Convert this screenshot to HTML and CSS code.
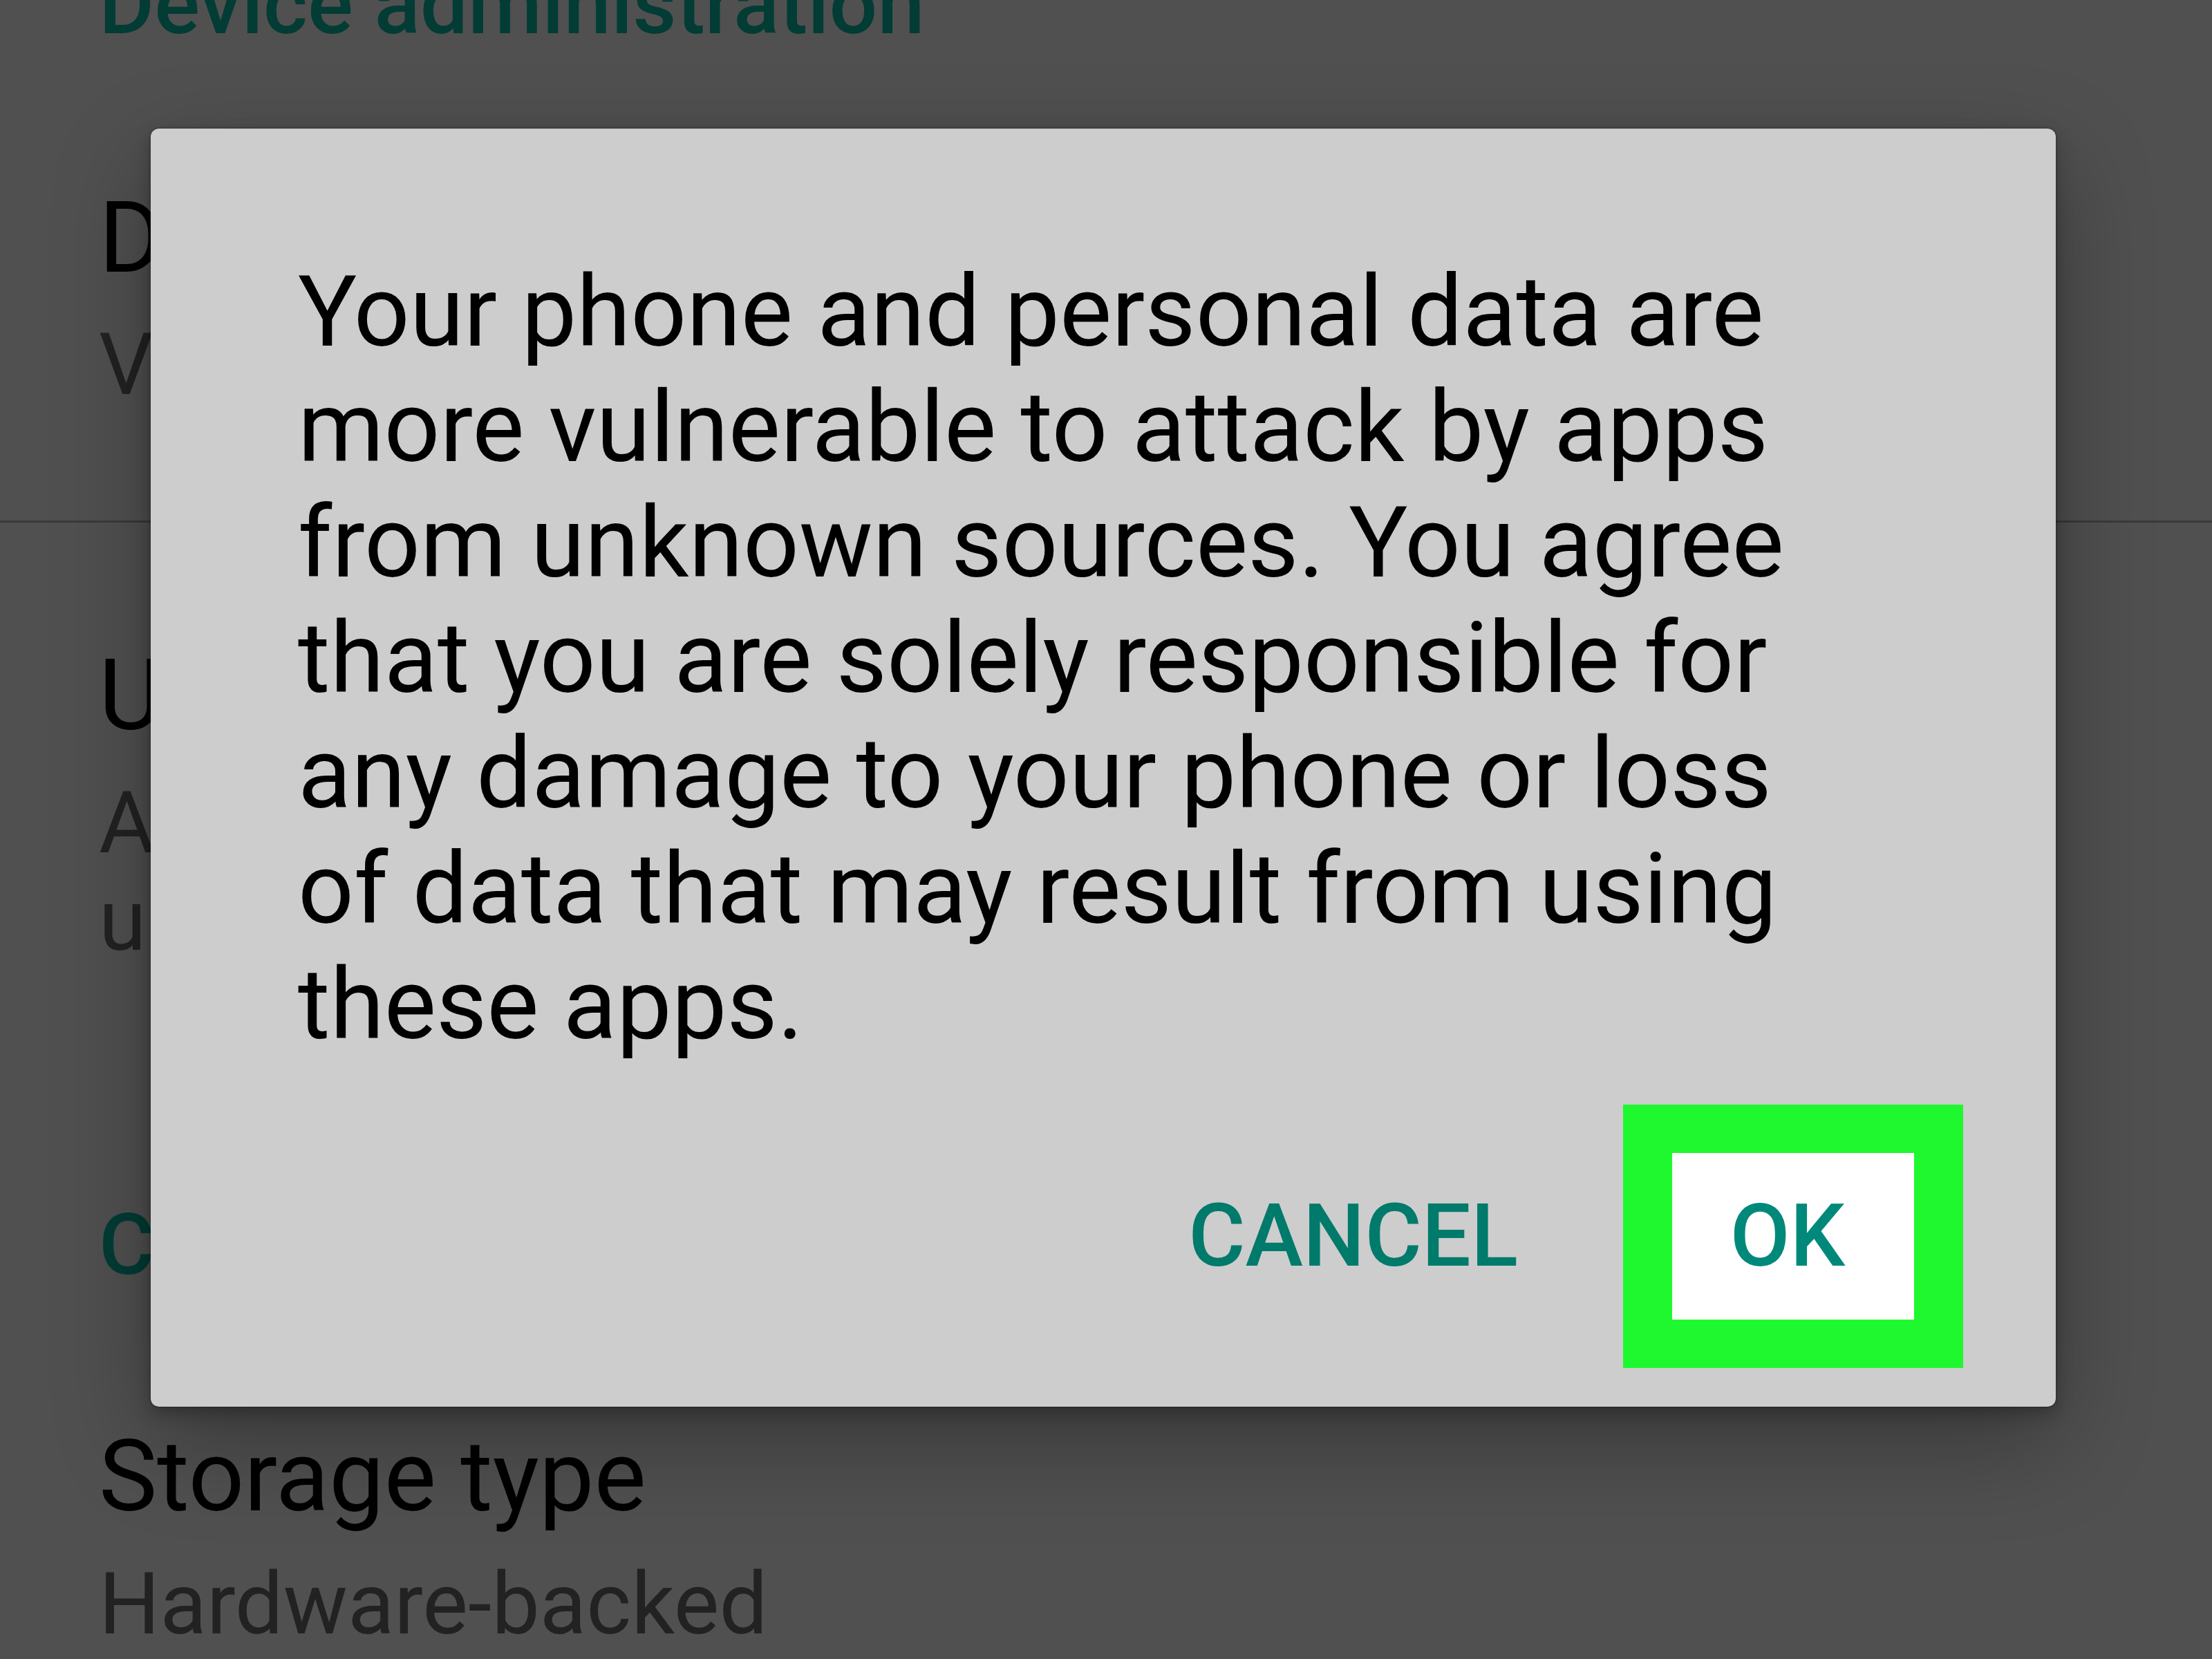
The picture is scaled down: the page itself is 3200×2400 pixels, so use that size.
FILE: index.html
```html
<!DOCTYPE html>
<html lang="en">
<head>
<meta charset="utf-8">
<title>Unknown sources</title>
<link rel="stylesheet" href="styles.css">
</head>
<body>
<div class="screen">
  <div class="settings">
    <div class="category">Device administration</div>
    <div class="item item-first">
      <div class="title">Device administrators</div>
      <div class="summary">View or deactivate device administrators</div>
    </div>
    <div class="divider"></div>
    <div class="item item-second">
      <div class="title">Unknown sources</div>
      <div class="summary">Allow installation of apps from<br>unknown sources</div>
    </div>
    <div class="category category-second">Credential storage</div>
    <div class="item item-third">
      <div class="title">Storage type</div>
      <div class="summary">Hardware-backed</div>
    </div>
  </div>

  <div class="dialog">
    <p class="message">Your phone and personal data are more vulnerable to attack by apps from unknown sources. You agree that you are solely responsible for any damage to your phone or loss of data that may result from using these apps.</p>
    <div class="actions">
      <button class="btn btn-cancel">CANCEL</button>
      <button class="btn btn-ok">OK</button>
    </div>
  </div>
</div>
</body>
</html>
```

FILE: styles.css
```css
html, body {
  margin: 0;
  padding: 0;
}

body {
  background: #505050;
  font-family: Roboto, "Liberation Sans", sans-serif;
}

.screen {
  position: relative;
  width: 3200px;
  height: 2400px;
  overflow: hidden;
  background: #505050;
}

.settings {
  margin-top: -69px;
}

.category {
  padding-left: 143px;
  font-size: 123px;
  line-height: 150px;
  font-weight: 500;
  color: #023c35;
  white-space: nowrap;
}

.category-second {
  margin-top: 324px;
}

.item {
  padding-left: 143px;
}

.item-first {
  margin-top: 184px;
}

.item-second {
  margin-top: 171px;
}

.item-third {
  margin-top: 181px;
}

.title {
  font-size: 142px;
  line-height: 160px;
  color: #000;
  white-space: nowrap;
}

.summary {
  margin-top: 33px;
  font-size: 124px;
  line-height: 141px;
  color: #222;
  white-space: nowrap;
}

.item-first .summary {
  margin-top: 32px;
}

.divider {
  margin-top: 155px;
  height: 3px;
  background: #3a3a3a;
}

.dialog {
  position: absolute;
  left: 218px;
  top: 186px;
  width: 2756px;
  box-sizing: border-box;
  padding: 182px 134px 56px 213px;
  background: #cdcdcd;
  border-radius: 12px;
  box-shadow:
    0 0 3px rgba(0, 0, 0, 0.55),
    0 10px 24px rgba(0, 0, 0, 0.25),
    0 50px 140px rgba(0, 0, 0, 0.3);
}

.message {
  margin: 0;
  max-width: 2220px;
  font-size: 142px;
  line-height: 167px;
  color: #000;
}

.actions {
  display: flex;
  justify-content: flex-end;
  align-items: center;
  gap: 152px;
  margin-top: 61px;
}

.btn {
  margin: 0;
  padding: 0;
  border: 0;
  background: none;
  font-family: Roboto, "Liberation Sans", sans-serif;
  font-weight: 500;
  font-size: 126px;
  line-height: 1.171;
  color: #007a6b;
}

.btn-ok {
  box-sizing: border-box;
  width: 492px;
  height: 381px;
  padding-right: 16px;
  border-style: solid;
  border-color: #1ff82f;
  border-width: 70px 71px;
  background: #fff;
  color: #00897a;
  text-align: center;
}
```
